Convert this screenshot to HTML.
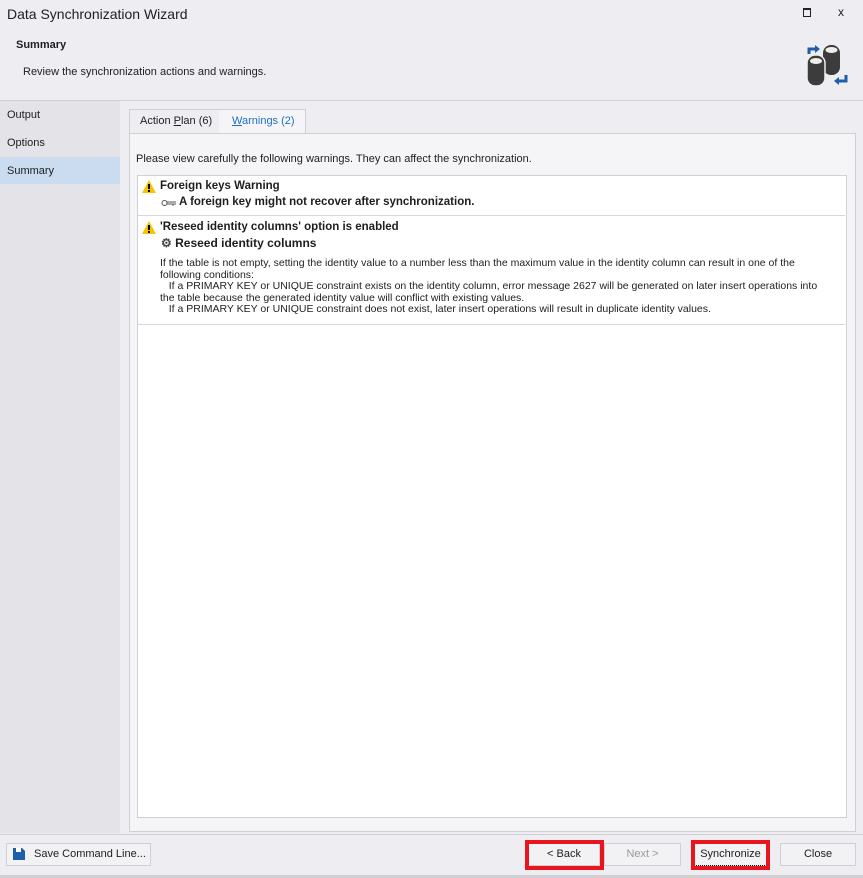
<!DOCTYPE html>
<html><head><style>
body{margin:0;width:863px;height:878px;background:#eeeef2;font-family:"Liberation Sans",sans-serif;font-size:11px;color:#1e1e1e;position:relative;overflow:hidden}
.a{position:absolute}
.btn{position:absolute;top:843px;height:23px;border:1px solid #cfcfd4;background:#f2f2f5;box-sizing:border-box;text-align:center;line-height:21px;font-size:11px}
.red{position:absolute;border:4px solid #e8141e;box-sizing:border-box}
.sec{position:absolute;left:138px;width:707px;border-bottom:1px solid #d6d6dc;background:#fff}
</style></head><body>
<div class="a" style="left:7px;top:6px;font-size:14px">Data Synchronization Wizard</div>
<div class="a" style="left:803px;top:8px;width:6px;height:6px;border:1px solid #222;border-top-width:2px"></div>
<div class="a" style="left:838px;top:5px;font-size:12px">x</div>
<div class="a" style="left:16px;top:39px;font-weight:bold">Summary</div>
<div class="a" style="left:23px;top:66px">Review the synchronization actions and warnings.</div>
<svg class="a" style="left:805px;top:42px" width="46" height="46" viewBox="0 0 46 46">
<rect x="18" y="3" width="17" height="30" rx="8" fill="#3c3c3c"/><ellipse cx="26.5" cy="8" rx="6" ry="3" fill="#eee"/>
<rect x="2" y="13" width="18" height="31" rx="8" fill="#3c3c3c" stroke="#eee" stroke-width="1.5"/><ellipse cx="11" cy="19" rx="6" ry="3" fill="#eee"/>
<path d="M4 12 V7 H11" stroke="#1d5fa8" stroke-width="3" fill="none"/><path d="M10 3 L15 7 L10 11Z" fill="#1d5fa8"/>
<path d="M41 33 V39 H33" stroke="#1d5fa8" stroke-width="3" fill="none"/><path d="M34 35 L29 39 L34 43Z" fill="#1d5fa8"/>
</svg>
<div class="a" style="left:0;top:100px;width:863px;height:1px;background:#d0d0d6"></div>
<div class="a" style="left:0;top:101px;width:120px;height:732px;background:#e3e3e8"></div>
<div class="a" style="left:7px;top:109px">Output</div>
<div class="a" style="left:7px;top:137px">Options</div>
<div class="a" style="left:0;top:157px;width:120px;height:27px;background:#c9dcf0"></div>
<div class="a" style="left:7px;top:165px">Summary</div>
<div class="a" style="left:129px;top:109px;width:90px;height:24px;border:1px solid #cfcfd4;border-bottom:none;background:#eeeef2"></div>
<div class="a" style="left:140px;top:115px">Action <u>P</u>lan (6)</div>
<div class="a" style="left:219px;top:109px;width:86px;height:25px;border:1px solid #cfcfd4;border-bottom:none;border-left:none;background:#f5f5f8"></div>
<div class="a" style="left:232px;top:115px;color:#1e6fc2"><u>W</u>arnings (2)</div>
<div class="a" style="left:129px;top:133px;width:725px;height:697px;border:1px solid #cfcfd4;background:#f5f5f8"></div>
<div class="a" style="left:136px;top:153px">Please view carefully the following warnings. They can affect the synchronization.</div>
<div class="a" style="left:137px;top:175px;width:708px;height:641px;border:1px solid #cfcfd4;background:#fff"></div>
<div class="sec" style="top:176px;height:39px"></div>
<div class="sec" style="top:216px;height:108px"></div>
<svg class="a" style="left:142px;top:180px" width="14" height="13"><path d="M7 0L14 13H0Z" fill="#f5c400"/><rect x="6" y="4" width="2" height="5" fill="#000"/><rect x="6" y="10" width="2" height="2" fill="#000"/></svg>
<div class="a" style="left:160px;top:180px;font-weight:bold;font-size:11.5px">Foreign keys Warning</div>
<svg class="a" style="left:161px;top:199px" width="16" height="8"><circle cx="3.5" cy="4" r="2.5" fill="none" stroke="#555"/><path d="M6 3H15M6 5H15M12 5V7" stroke="#555" stroke-width="1" fill="none"/></svg>
<div class="a" style="left:179px;top:196px;font-weight:bold;font-size:11.5px">A foreign key might not recover after synchronization.</div>
<svg class="a" style="left:142px;top:221px" width="14" height="13"><path d="M7 0L14 13H0Z" fill="#f5c400"/><rect x="6" y="4" width="2" height="5" fill="#000"/><rect x="6" y="10" width="2" height="2" fill="#000"/></svg>
<div class="a" style="left:160px;top:221px;font-weight:bold;font-size:11.5px">'Reseed identity columns' option is enabled</div>
<div class="a" style="left:161px;top:236px;font-weight:bold;font-size:12px"><span style="color:#444">⚙</span> Reseed identity columns</div>
<div class="a" style="left:160px;top:258px;width:668px;line-height:11.5px;font-size:10.5px">If the table is not empty, setting the identity value to a number less than the maximum value in the identity column can result in one of the following conditions:<br>&nbsp;&nbsp;&nbsp;If a PRIMARY KEY or UNIQUE constraint exists on the identity column, error message 2627 will be generated on later insert operations into the table because the generated identity value will conflict with existing values.<br>&nbsp;&nbsp;&nbsp;If a PRIMARY KEY or UNIQUE constraint does not exist, later insert operations will result in duplicate identity values.</div>
<div class="a" style="left:0;top:834px;width:863px;height:1px;background:#cfcfd4"></div>
<div class="btn" style="left:6px;width:145px;text-align:left;padding-left:27px">Save Command Line...</div>
<svg class="a" style="left:13px;top:848px" width="12" height="12"><path d="M0 0H9L12 3V12H0Z" fill="#1d5fa8"/><rect x="3" y="0" width="5" height="4" fill="#fff"/></svg>
<div class="btn" style="left:528px;width:72px">&lt; Back</div>
<div class="red" style="left:525px;top:840px;width:79px;height:30px"></div>
<div class="btn" style="left:604px;width:77px;color:#999">Next &gt;</div>
<div class="btn" style="left:694px;width:73px;border:1px dotted #000">Synchronize</div>
<div class="red" style="left:691px;top:840px;width:79px;height:30px"></div>
<div class="btn" style="left:780px;width:76px">Close</div>
<div class="a" style="left:0;top:875px;width:863px;height:3px;background:#cfcfd4"></div>
</body></html>
